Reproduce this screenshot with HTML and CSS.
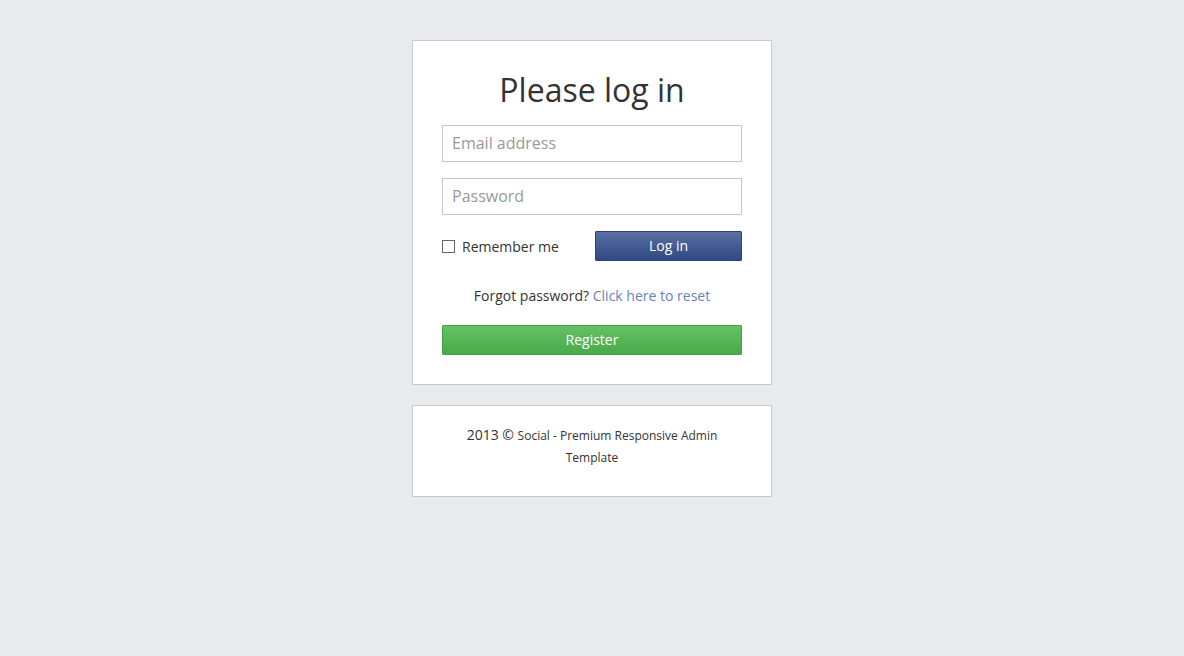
FILE: index.html
```html
<!DOCTYPE html>
<html>
<head>
<meta charset="utf-8">
<link rel="stylesheet" href="styles.css">
</head>
<body>
<div class="page">
  <div class="card login">
    <h1 class="title">Please log in</h1>
    <input class="field" type="text" placeholder="Email address">
    <input class="field" type="password" placeholder="Password">
    <div class="row">
      <label class="remember"><input class="check" type="checkbox"><span>Remember me</span></label>
      <button class="btn btn-login">Log in</button>
    </div>
    <p class="forgot">Forgot password? <a class="link" href="#">Click here to reset</a></p>
    <button class="btn btn-register">Register</button>
  </div>
  <div class="card footer">
    <p class="copy">2013 &copy; <small class="small">Social - Premium Responsive Admin Template</small></p>
  </div>
</div>
</body>
</html>
```
FILE: styles.css
```css
html, body {
  margin: 0;
  padding: 0;
  background: #e9eaee;
  font-family: "Open Sans", "Liberation Sans", sans-serif;
  color: #333;
}
.page {
  width: 360px;
  margin: 0 auto;
  padding-top: 40px;
  display: flex;
  flex-direction: column;
  gap: 20px;
}
.card {
  background: #fff;
  border: 1px solid #c9c9cd;
}
.login {
  padding: 29px;
  display: flex;
  flex-direction: column;
}
.title {
  margin: 0 0 15px;
  font-size: 32px;
  font-weight: 400;
  line-height: 40px;
  text-align: center;
  color: #333;
}
.field {
  box-sizing: border-box;
  width: 300px;
  height: 37px;
  margin: 0 0 16px;
  padding: 0 9px 1px;
  border: 1px solid #c0c6d3;
  border-radius: 0;
  font-family: "Open Sans", "Liberation Sans", sans-serif;
  font-size: 16px;
  color: #333;
  outline: none;
}
.field::placeholder {
  color: #999;
}
.row {
  display: flex;
  justify-content: space-between;
  align-items: center;
  height: 30px;
  margin-top: 0;
}
.remember {
  display: flex;
  align-items: center;
  font-size: 14px;
  color: #333;
}
.check {
  appearance: none;
  -webkit-appearance: none;
  box-sizing: border-box;
  width: 13px;
  height: 13px;
  margin: 1px 7px 0 0;
  border: 1px solid #666;
  background: #fff;
  border-radius: 0;
}
.btn {
  box-sizing: border-box;
  height: 30px;
  padding: 0 0 1px;
  font-family: "Open Sans", "Liberation Sans", sans-serif;
  font-size: 14px;
  color: #fff;
  border-radius: 1px;
  cursor: pointer;
}
.btn-login {
  width: 147px;
  background: linear-gradient(#5a6fa3, #2d4a82);
  border: 1px solid #2e4373;
}
.forgot {
  margin: 25px 0 19px;
  text-align: center;
  font-size: 14px;
  line-height: 20px;
  color: #333;
}
.link {
  color: #6883b8;
  text-decoration: none;
}
.btn-register {
  width: 300px;
  background: linear-gradient(#64c264, #4aa94a);
  border: 1px solid #45a045;
}
.footer {
  padding: 18px 29px 28px;
}
.copy {
  margin: 0;
  text-align: center;
  font-size: 14px;
  line-height: 21px;
  color: #333;
}
.small {
  font-size: 12px;
}
```
